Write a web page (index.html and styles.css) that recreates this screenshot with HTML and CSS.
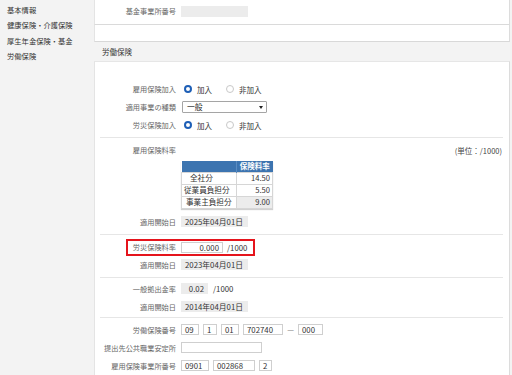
FILE: index.html
```html
<!DOCTYPE html>
<html lang="ja">
<head>
<meta charset="utf-8">
<title>労働保険</title>
<link rel="stylesheet" href="styles.css">
</head>
<body>
<div class="layout">
  <nav class="sidebar">
    <div class="nav-item">基本情報</div>
    <div class="nav-item">健康保険・介護保険</div>
    <div class="nav-item">厚生年金保険・基金</div>
    <div class="nav-item">労働保険</div>
  </nav>
  <main class="main">
    <div class="card card-top">
      <div class="row">
        <div class="label">基金事業所番号</div>
        <span class="box box-gray w67"></span>
      </div>
    </div>
    <div class="card card-empty"></div>
    <div class="section-title">労働保険</div>
    <div class="card card-main">
      <div class="section s1">
        <div class="row">
          <div class="label">雇用保険加入</div>
          <span class="radio"><span class="dot on"></span>加入</span>
          <span class="radio"><span class="dot"></span>非加入</span>
        </div>
        <div class="row">
          <div class="label">適用事業の種類</div>
          <span class="select">一般<span class="caret"></span></span>
        </div>
        <div class="row">
          <div class="label">労災保険加入</div>
          <span class="radio"><span class="dot on"></span>加入</span>
          <span class="radio"><span class="dot"></span>非加入</span>
        </div>
      </div>
      <div class="section s2">
        <div class="row">
          <div class="label">雇用保険料率</div>
          <span class="unit">(単位：/1000)</span>
        </div>
        <table class="rate-table">
          <colgroup><col class="col1"><col class="col2"></colgroup>
          <thead>
            <tr><th></th><th>保険料率</th></tr>
          </thead>
          <tbody>
            <tr><td class="c1 i1">全社分</td><td class="c2">14.50</td></tr>
            <tr><td class="c1">従業員負担分</td><td class="c2">5.50</td></tr>
            <tr><td class="c1 i2">事業主負担分</td><td class="c2 shade">9.00</td></tr>
          </tbody>
        </table>
        <div class="row row-date">
          <div class="label">適用開始日</div>
          <span class="box box-gray w67">2025年04月01日</span>
        </div>
      </div>
      <div class="section s3">
        <div class="highlight">
          <div class="label hl-label">労災保険料率</div>
          <span class="box w42 right">0.000</span>
          <span class="per">/1000</span>
        </div>
        <div class="row">
          <div class="label">適用開始日</div>
          <span class="box box-gray w67">2023年04月01日</span>
        </div>
      </div>
      <div class="section s4">
        <div class="row">
          <div class="label">一般拠出金率</div>
          <span class="box box-gray w27 right">0.02</span>
          <span class="per per2">/1000</span>
        </div>
        <div class="row">
          <div class="label">適用開始日</div>
          <span class="box box-gray w67">2014年04月01日</span>
        </div>
      </div>
      <div class="section s5">
        <div class="row">
          <div class="label">労働保険番号</div>
          <span class="box w18">09</span>
          <span class="box w14 g4">1</span>
          <span class="box w18 g4">01</span>
          <span class="box w40 g4">702740</span>
          <span class="dash">—</span>
          <span class="box w25">000</span>
        </div>
        <div class="row">
          <div class="label">提出先公共職業安定所</div>
          <span class="box w81"></span>
        </div>
        <div class="row">
          <div class="label">雇用保険事業所番号</div>
          <span class="box w28">0901</span>
          <span class="box w42 g4">002868</span>
          <span class="box w13 g4">2</span>
        </div>
      </div>
    </div>
  </main>
</div>
</body>
</html>
```
FILE: styles.css
```css
* { box-sizing: border-box; }
html, body { margin: 0; padding: 0; }
body {
  width: 512px;
  height: 375px;
  overflow: hidden;
  background: #f3f3f3;
  font-family: "Noto Sans CJK JP", "Noto Sans", sans-serif;
  font-size: 7.2px;
  color: #333;
}
.layout { display: flex; }
.sidebar { width: 94px; flex: none; padding-top: 3px; }
.nav-item { padding-left: 7px; line-height: 15.3px; font-size: 7.3px; color: #333; }
.main { flex: 1; padding-right: 2px; }

.card {
  background: #fff;
  border-left: 1px solid #e4e4e4;
  border-right: 1px solid #dcdcdc;
}
.card-top { height: 25px; padding: 2px 0 0 5px; border-bottom: 1px solid #dadada; }
.card-empty { height: 17px; border-bottom: 1px solid #d8d8d8; }
.section-title {
  height: 19px;
  line-height: 19px;
  padding-left: 8px;
  font-size: 7.5px;
  color: #333;
}
.card-main { height: 320px; border-top: 1px solid #e6e6e6; }

.section { margin: 0 6px 0 5px; border-bottom: 1px solid #e6e6e6; }
.s5 { border-bottom: none; }
.s1 { padding: 18px 0 3px; }
.s2 { padding: 3px 0 3px; }
.s3 { padding: 4px 0 3px; }
.s4 { padding: 2px 0 1px; }
.s5 { padding: 3px 0 0; }

.row { display: flex; align-items: center; height: 18px; }
.label {
  width: 76px;
  flex: none;
  margin-right: 5px;
  text-align: right;
  color: #666;
  font-size: 7.2px;
  white-space: nowrap;
}

.box {
  display: inline-block;
  height: 11px;
  line-height: 9px;
  border: 1px solid #cfcfcf;
  background: #fff;
  padding: 0 3px;
  font-size: 7.8px;
  color: #333;
  white-space: nowrap;
}
.box-gray { background: #ececec; border-color: #ececec; }
.right { text-align: right; }
.w13 { width: 13px; }
.w14 { width: 14px; }
.w18 { width: 18px; }
.w25 { width: 25px; }
.w27 { width: 27px; }
.w28 { width: 28px; }
.w40 { width: 40px; }
.w42 { width: 42px; }
.w67 { width: 67px; }
.w81 { width: 81px; }
.g4 { margin-left: 4px; }
.dash { width: 15px; text-align: center; color: #666; font-size: 7.5px; }

.radio { display: inline-flex; align-items: center; font-size: 7.5px; color: #333; margin-right: 14px; }
.radio:first-of-type { margin-left: 3px; }
.dot {
  width: 8px;
  height: 8px;
  border-radius: 50%;
  border: 1px solid #c8c8c8;
  background: #fff;
  margin-right: 5px;
}
.dot.on { border: 2.3px solid #1e5fb6; }

.select {
  position: relative;
  display: inline-block;
  width: 85px;
  height: 12px;
  line-height: 10px;
  border: 1px solid #a5a5a5;
  border-radius: 1px;
  padding-left: 4px;
  font-size: 7.8px;
  color: #222;
  margin-left: 1px;
}
.caret {
  position: absolute;
  right: 3px;
  top: 4px;
  width: 0;
  height: 0;
  border-left: 2px solid transparent;
  border-right: 2px solid transparent;
  border-top: 3px solid #222;
}

.unit { margin-left: auto; margin-right: 1px; font-size: 7.5px; color: #444; }

.rate-table {
  margin: 2px 0 0 81px;
  width: 91px;
  table-layout: fixed;
  border-collapse: collapse;
  font-size: 7.6px;
  box-shadow: 0 1px 1px rgba(0,0,0,0.18);
}
.rate-table .col1 { width: 55px; }
.rate-table .col2 { width: 36px; }
.rate-table th {
  background: #3c74b0;
  color: #fff;
  height: 11px;
  line-height: 10px;
  padding: 0;
  font-weight: bold;
  font-size: 7.5px;
  text-align: center;
  border-left: 1px solid #5a8cc2;
}
.rate-table th:first-child { border-left: none; }
.rate-table td {
  border: 1px solid #d6d6d6;
  height: 12px;
  line-height: 10px;
  padding: 0 2px;
  color: #333;
  white-space: nowrap;
  overflow: hidden;
}
.rate-table .c1 { text-align: left; }
.rate-table .c2 { text-align: right; }
.rate-table td.i1 { padding-left: 8px; }
.rate-table td.i2 { padding-left: 4px; }
.rate-table td.shade { background: #ececec; }
.row-date { margin-top: 4px; }

.highlight {
  display: flex;
  align-items: center;
  width: 129px;
  height: 17px;
  margin-left: 26px;
  border: 2px solid #e5141c;
}
.hl-label { width: 48px; }
.per { margin-left: 4px; font-size: 7.8px; color: #333; }
.per2 { margin-left: 5px; }
```
